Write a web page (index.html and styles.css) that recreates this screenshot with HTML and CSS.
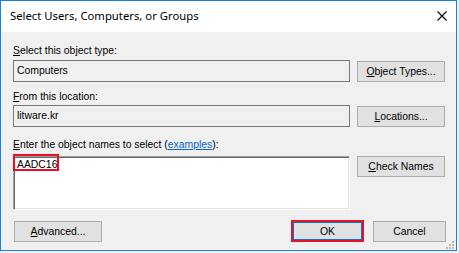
FILE: index.html
```html
<!DOCTYPE html>
<html lang="en">
<head>
  <meta charset="UTF-8">
  <title>Select Users, Computers, or Groups</title>
  <link rel="stylesheet" href="styles.css">
</head>
<body>
  <div class="window">
    <div class="title-bar">
      <span class="title">Select Users, Computers, or Groups</span>
      <svg class="close" width="10" height="10" viewBox="0 0 10 10">
        <path d="M0.5 0.5 L9.5 9.5 M9.5 0.5 L0.5 9.5" stroke="#000" stroke-width="1.1"/>
      </svg>
    </div>

    <div class="content">
      <div class="fields">
        <label class="label label-first"><u>S</u>elect this object type:</label>
        <div class="field">Computers</div>
        <button class="btn btn-side"><u>O</u>bject Types...</button>

        <label class="label"><u>F</u>rom this location:</label>
        <div class="field">litware.kr</div>
        <button class="btn btn-side"><u>L</u>ocations...</button>

        <label class="label label-names"><u>E</u>nter the object names to select (<a href="#" class="link">examples</a>):</label>
        <div class="names-box">
          <span class="names-text">AADC16</span>
          <span class="mark"></span>
        </div>
        <button class="btn btn-side btn-top"><u>C</u>heck Names</button>
      </div>

      <div class="footer">
        <button class="btn btn-advanced"><u>A</u>dvanced...</button>
        <div class="footer-right">
          <button class="btn btn-ok">OK</button>
          <button class="btn btn-cancel">Cancel</button>
        </div>
      </div>
    </div>

    <svg class="grip" width="8" height="8" viewBox="0 0 8 8">
      <rect x="6" y="0" width="2" height="2" fill="#b8b8b8"/>
      <rect x="3" y="3" width="2" height="2" fill="#b8b8b8"/>
      <rect x="6" y="3" width="2" height="2" fill="#b8b8b8"/>
      <rect x="0" y="6" width="2" height="2" fill="#b8b8b8"/>
      <rect x="3" y="6" width="2" height="2" fill="#b8b8b8"/>
      <rect x="6" y="6" width="2" height="2" fill="#b8b8b8"/>
    </svg>
  </div>
</body>
</html>
```

FILE: styles.css
```css
body {
  margin: 0;
  background: #f0f0f0;
  font-family: "Liberation Sans", Arial, sans-serif;
  font-size: 10.4px;
  color: #000;
}

.window {
  position: relative;
  width: 455px;
  height: 249px;
  border: 1px solid #1883d7;
  background: #f0f0f0;
}

.title-bar {
  display: flex;
  align-items: center;
  justify-content: space-between;
  height: 31px;
  padding: 0 9px 0 9px;
  background: #fff;
}

.title {
  font-family: "Noto Sans", sans-serif;
  font-size: 11.3px;
  padding-bottom: 2px;
}

.close {
  margin-bottom: 1px;
}

.content {
  padding: 11px 10px 0 12px;
}

.fields {
  display: grid;
  grid-template-columns: 337px 88px;
  column-gap: 7px;
}

.label {
  grid-column: 1 / 3;
  height: 16px;
  line-height: 16px;
  margin-top: 7px;
}

.label-first {
  margin-top: 0;
  margin-bottom: 1px;
}

.label-names {
  margin-top: 10px;
  margin-bottom: 3px;
}

.link {
  color: #0066cc;
  text-decoration: underline;
}

.field {
  height: 22px;
  box-sizing: border-box;
  border: 1px solid #7a7a7a;
  background: #f0f0f0;
  padding: 0 3px;
  line-height: 20px;
}

.names-box {
  position: relative;
  height: 54px;
  box-sizing: border-box;
  background: #fff;
  border-top: 1px solid #a0a0a0;
  border-left: 1px solid #a0a0a0;
  border-right: 1px solid #fff;
  border-bottom: 1px solid #fff;
  box-shadow: inset 1px 1px 0 #696969, inset -1px -1px 0 #e3e3e3;
  padding: 0 2px;
}

.names-text {
  display: block;
  line-height: 14px;
  padding-top: 1px;
  padding-left: 1px;
}

.mark {
  position: absolute;
  left: -1px;
  top: -3px;
  width: 46px;
  height: 17px;
  box-sizing: border-box;
  border: 2px solid #e81123;
}

.btn {
  font-family: "Liberation Sans", Arial, sans-serif;
  font-size: 10.4px;
  color: #000;
  height: 21px;
  box-sizing: border-box;
  border: 1px solid #adadad;
  background: #e1e1e1;
  padding: 0;
  margin: 0;
}

.btn-side {
  align-self: end;
}

.btn-top {
  align-self: start;
}

.footer {
  display: flex;
  justify-content: space-between;
  align-items: center;
  margin-top: 10px;
}

.btn-advanced {
  width: 88px;
  margin-left: 1px;
}

.footer-right {
  display: flex;
  align-items: center;
  gap: 9px;
}

.btn-ok {
  width: 73px;
  height: 22px;
  border: 2px solid #e81123;
  box-shadow: inset 0 0 0 1px #0078d7;
}

.btn-cancel {
  width: 73px;
}

.grip {
  position: absolute;
  right: 2px;
  bottom: 1px;
}
```
